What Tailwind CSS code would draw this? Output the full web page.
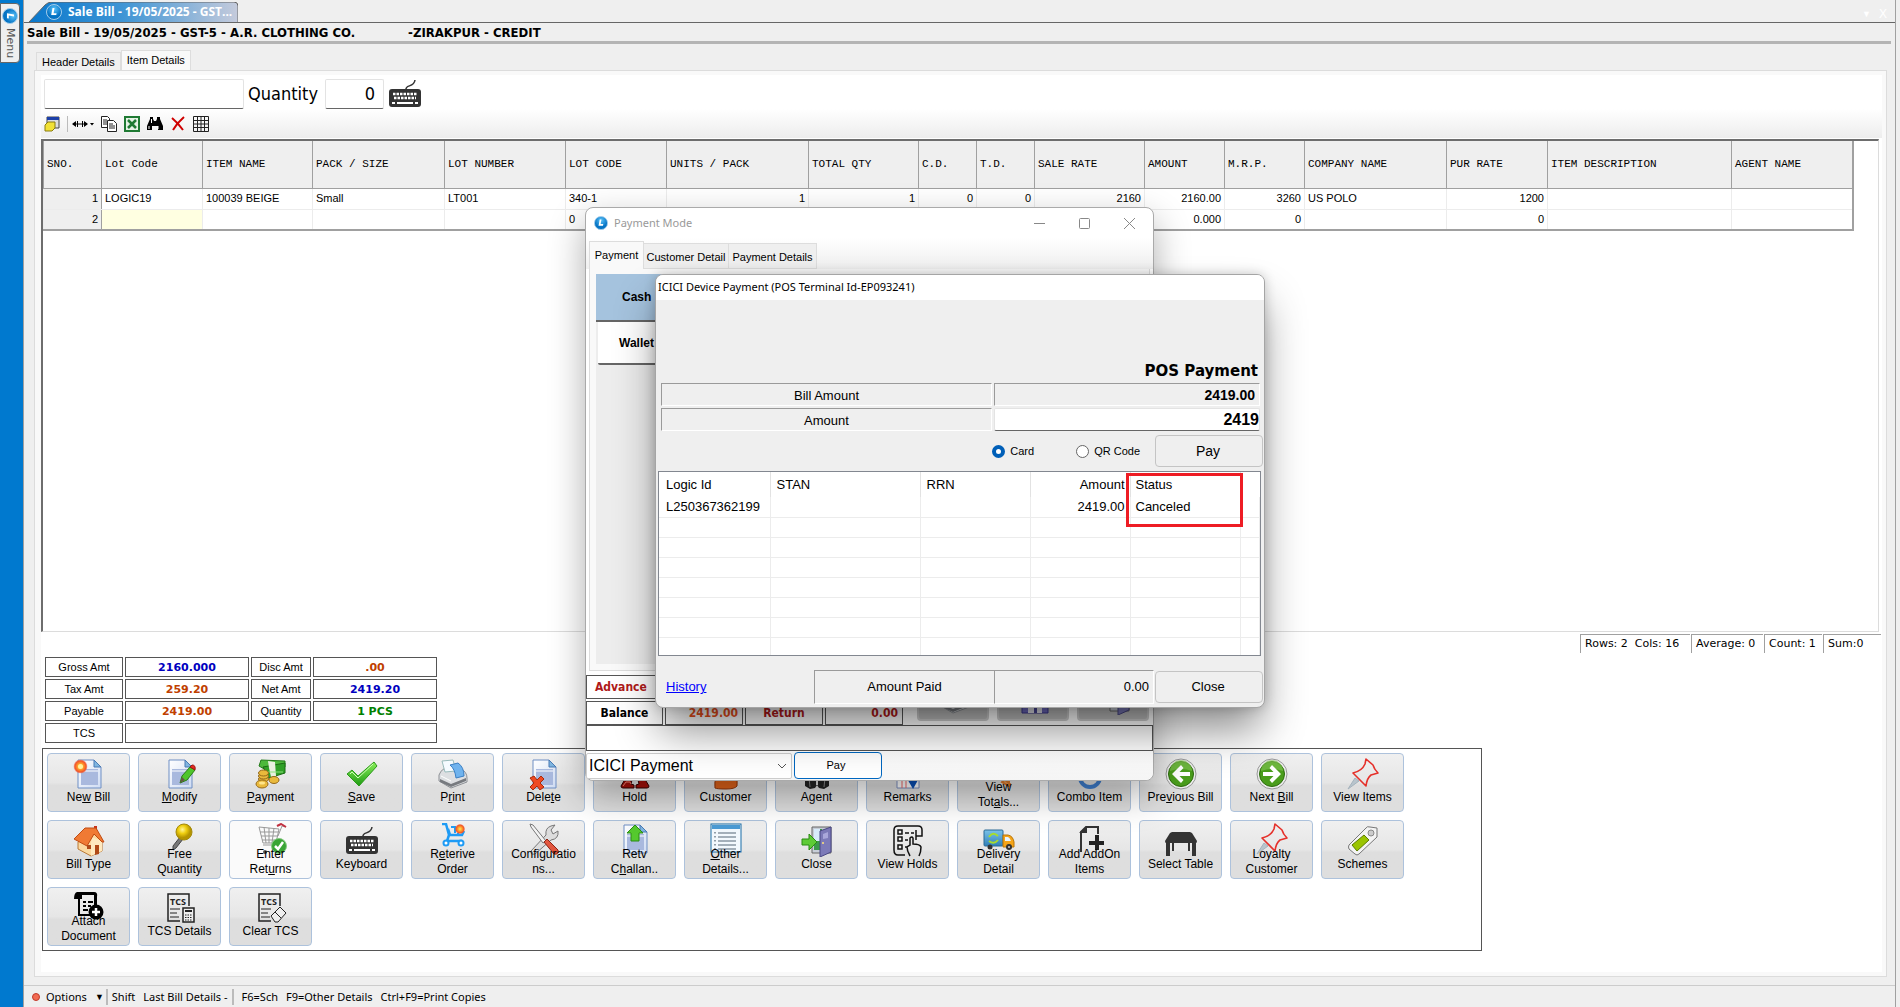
<!DOCTYPE html>
<html lang="en">
<head>
  <meta charset="UTF-8" />
  <meta name="viewport" content="width=device-width, initial-scale=1.0" />
  <title>Sale Bill</title>
  <script src="https://cdn.jsdelivr.net/npm/@tailwindcss/browser@4"></script>
</head>
<body class="flex min-h-screen bg-[#efefef] text-black font-['Liberation_Sans',Arial,sans-serif] text-xs">

  <!-- Icon library (kept rendered at zero size so that the gradients resolve) -->
  <svg class="absolute size-0" aria-hidden="true">
    <defs>
      <linearGradient id="gPaper" x1="0" y1="0" x2="1" y2="1"><stop offset="0" stop-color="#fff"/><stop offset="1" stop-color="#cfdcf3"/></linearGradient>
      <linearGradient id="gGreen" x1="0" y1="0" x2="0" y2="1"><stop offset="0" stop-color="#8af05a"/><stop offset="1" stop-color="#1e9a12"/></linearGradient>
      <linearGradient id="gTruck" x1="0" y1="0" x2="0" y2="1"><stop offset="0" stop-color="#7cc4ea"/><stop offset="1" stop-color="#2f7fb8"/></linearGradient>
      <radialGradient id="gGold" cx=".4" cy=".35"><stop offset="0" stop-color="#fff59a"/><stop offset=".5" stop-color="#f0cf10"/><stop offset="1" stop-color="#b59400"/></radialGradient>
      <radialGradient id="gSun"><stop offset="0" stop-color="#ffe95a"/><stop offset=".45" stop-color="#ff9a2a"/><stop offset=".8" stop-color="#f2542a"/><stop offset="1" stop-color="#f2542a" stop-opacity=".25"/></radialGradient>
      <radialGradient id="gBall" cx=".5" cy=".3"><stop offset="0" stop-color="#5cc4fa"/><stop offset="1" stop-color="#0573c4"/></radialGradient>
      <symbol id="logo" viewBox="0 0 16 16"><circle cx="8" cy="8" r="7.500" fill="url(#gBall)" stroke="#a5cdea"/><path d="M6.500 4 5.200 11h5l.4-1.800H7.600L8.500 4z" fill="#fff"/></symbol>
      <symbol id="page" viewBox="0 0 32 32"><path d="M5 2h16l7 7v21H5z" fill="url(#gPaper)" stroke="#6f8fc4"/><path d="M21 2v7h7z" fill="#7fb6e0" stroke="#4a7ab5"/><path d="M8 11h17v16H8z" fill="#a9b9de"/><path d="M8 13h17" stroke="#fff"/></symbol>
      <symbol id="newbill" viewBox="0 0 32 32"><use href="#page"/><circle cx="7.500" cy="8.500" r="7" fill="url(#gSun)"/><circle cx="7.500" cy="8.500" r="2.500" fill="#fff3a0"/></symbol>
      <symbol id="modify" viewBox="0 0 32 32"><use href="#page"/><path d="m16 25 2-7 8-9 5 3-8 10z" fill="#4fc62c" stroke="#2a7d15"/><path d="m26 9 2-2q4 0 3 5z" fill="#e02b20" stroke="#a01510"/><path d="m16 25 2-6 3 3z" fill="#654"/></symbol>
      <symbol id="payment" viewBox="0 0 32 32"><path d="m6 2 24 1v6L11 12 4 8z" fill="#4db93c" stroke="#247a1b"/><path d="m8 9 22-4v10l-16 5z" fill="#2fa026" stroke="#1b6b14"/><path d="m13 3 7 1 1 14-5 1-2-9z" fill="#e9efdf"/><path d="M11 14h17" stroke="#8be07a"/><g fill="#e9b93c" stroke="#95691a"><ellipse cx="8.500" cy="21" rx="5" ry="3"/><ellipse cx="8.500" cy="18" rx="5" ry="3"/><ellipse cx="8.500" cy="15" rx="5" ry="3"/><ellipse cx="19" cy="22" rx="5" ry="3.500"/><ellipse cx="7" cy="26" rx="6" ry="4"/></g><ellipse cx="7" cy="25" rx="3" ry="1.500" fill="#ffe58a"/></symbol>
      <symbol id="save" viewBox="0 0 32 32"><path d="m1 16 5-4 6 6L28 4l3 4-18 20z" fill="url(#gGreen)" stroke="#2b9a1a"/><path d="m4 16 2-2 6 6L27 6" fill="none" stroke="#d0ffb8"/></symbol>
      <symbol id="print" viewBox="0 0 32 32"><path d="M2 17q3-7 8-7l14 1q6 3 6 9v4l-16 6L2 23z" fill="#dddfe2" stroke="#8c8f94"/><path d="m5 3 11-1 3 11-11 1z" fill="#f5fbff" stroke="#9bb"/><path d="m13 7 8-2q6 4 6 13l-8 2q-1-9-6-13z" fill="#6fb3ee" stroke="#3a7fc4"/><path d="m3 21 11 5 15-6v3l-15 6-11-5z" fill="#777a7f"/><path d="m4 18 10 5" stroke="#fff"/></symbol>
      <symbol id="delete" viewBox="0 0 32 32"><use href="#page"/><path d="m2 20 4-2 3 4 4-4 3 3-4 4 4 4-4 3-3-4-4 4-3-3 4-4z" fill="#ef4a23" stroke="#a82a0c"/></symbol>
      <symbol id="hold" viewBox="0 0 32 32"><path d="m8 18-6 10q0 2 2 2h11v-3l-3-1 2-8zM24 18l6 10q0 2-2 2H17v-3l3-1-2-8z" fill="#a8100b" stroke="#300"/><path d="m4 28 3-4h4l1 2" fill="none" stroke="#ff8d7a"/></symbol>
      <symbol id="customer" viewBox="0 0 32 32"><circle cx="16" cy="9" r="7" fill="#f3c9a0"/><path d="M5 30q-2-14 11-14t11 12q-2 3-11 3T5 30z" fill="#e0631a" stroke="#93360a"/></symbol>
      <symbol id="agent" viewBox="0 0 32 32"><path d="M4 28V18l6-4 6 3 6-3 6 4v10l-5 3-5-1-2-3-2 3-5 1z" fill="#222"/><path d="M15 17h2v10h-2z" fill="#ddd"/><path d="m8 20 1 9M24 20l-1 9" stroke="#888"/></symbol>
      <symbol id="remarks" viewBox="0 0 32 32"><path d="M5 4h22v26H5z" fill="#fff" stroke="#7d8fc0"/><path d="M10 4v26M14 4v26" stroke="#e66"/><path d="M5 14h22M5 20h22" stroke="#aac"/><path d="m17 20 4 7 6-11" fill="none" stroke="#0a4fb5" stroke-width="4"/></symbol>
      <symbol id="totals" viewBox="0 0 32 32"><circle cx="16" cy="14" r="9" fill="#dfe9f5" stroke="#777" stroke-width="2"/><path d="m20 22 8 7M26 20v10l-7-4z" stroke="#e07b2a" stroke-width="2" fill="#f2a45c"/></symbol>
      <symbol id="combo" viewBox="0 0 32 32"><circle cx="16" cy="19" r="10" fill="none" stroke="#3f7fd0" stroke-width="4"/></symbol>
      <symbol id="prev" viewBox="0 0 32 32"><circle cx="16" cy="16" r="15" fill="#eee" stroke="#999"/><circle cx="16" cy="16" r="12.500" fill="#4a9d1c" stroke="#2c6b0c"/><path d="M5 13a11 11 0 0 1 22 0q-11-4-22 0z" fill="#84c653" opacity=".6"/><path d="M16 7v0L7 16l9 9 2.500-3-4-4H25v-4H14.500l4-4z" fill="#fff"/></symbol>
      <symbol id="next" viewBox="0 0 32 32"><circle cx="16" cy="16" r="15" fill="#eee" stroke="#999"/><circle cx="16" cy="16" r="12.500" fill="#4a9d1c" stroke="#2c6b0c"/><path d="M5 13a11 11 0 0 1 22 0q-11-4-22 0z" fill="#84c653" opacity=".6"/><path d="m16 7 9 9-9 9-2.500-3 4-4H7v-4h10.500l-4-4z" fill="#fff"/></symbol>
      <symbol id="pin" viewBox="0 0 32 32"><path d="M8 20 1 31l11-8z" fill="#b8c4cc" stroke="#a5b3bd"/><path d="m19 1-1 5q-3 7-12 9l13 13q1-8 5-11l7-2q-4-4-5-8z" fill="none" stroke="#e5302a" stroke-width="1.600" stroke-linejoin="round"/></symbol>
      <symbol id="house" viewBox="0 0 32 32"><path d="M5 17v7l13 7 11-5V14L19 8z" fill="#fbd9a0" stroke="#b87836"/><path d="M19 12 29 16v10l-11 5V18z" fill="#ffe9bf"/><path d="M21 1h3v9h-3z" fill="#c9301a"/><path d="M12 3h11l8 14h-2l-8-8-7 12L1 14z" fill="#f07a34" stroke="#c04b12"/><path d="M22 20h4v9l-4 1zM14 20h4v4h-4z" fill="#b04a18"/></symbol>
      <symbol id="goldpin" viewBox="0 0 32 32"><path d="m16 14-7 9v4l3-2 7-9z" fill="#777" stroke="#444"/><circle cx="20" cy="9" r="8" fill="url(#gGold)" stroke="#a48a0a"/></symbol>
      <symbol id="returns" viewBox="0 0 32 32"><path d="m4 4 20 2-3 14H8zM5 9h18M6 13h17M7 17h15M9 4l2 16M14 5v15M19 5l-2 15M8 22h16M23 13l4-10 4 1" fill="none" stroke="#999"/><path d="m22 3 4-2 5 3" fill="none" stroke="#c03040" stroke-width="2"/><circle cx="24" cy="23" r="7.500" fill="#3aa535" stroke="#86c983"/><path d="m20 23 3 3 5-7" fill="none" stroke="#fff" stroke-width="2.500"/><circle cx="10" cy="29" r="2" fill="#555"/></symbol>
      <symbol id="keyboard" viewBox="0 0 32 32"><path d="M17 12c-1-6 8-2 9-10" fill="none" stroke="#333" stroke-width="1.500"/><rect x="0" y="11" width="32" height="18" rx="3" fill="#333"/><path d="M4 16h24M5 20h22" stroke="#fff" stroke-width="2.500" stroke-dasharray="2.500 1"/><path d="M3 25h3M8 25h16M26 25h3" stroke="#fff" stroke-width="2"/></symbol>
      <symbol id="retrieve" viewBox="0 0 32 32"><path d="M5 1h4l3 11h13l2-4M12 12l-2 6h15M11 6l2 6" fill="none" stroke="#1e9bf5" stroke-width="2.500"/><path d="M14 4h4v6M21 10v2" fill="none" stroke="#1e9bf5" stroke-width="2"/><circle cx="23" cy="6" r="5" fill="url(#gSun)"/><circle cx="9" cy="20" r="2.500" fill="#fff" stroke="#1e9bf5" stroke-width="2"/><circle cx="24" cy="20" r="2.500" fill="#fff" stroke="#1e9bf5" stroke-width="2"/></symbol>
      <symbol id="tools" viewBox="0 0 32 32"><path d="m3 28 15-16q-1-7 5-9l4-1-4 5 2 4 5-3q1 8-7 9L7 31q-5 1-4-3z" fill="#ddd" stroke="#777"/><path d="m2 1 3 1 13 16-3 2L3 4z" fill="#f3f3f3" stroke="#777"/><path d="m16 19 3-3 11 11q1 5-4 4z" fill="#e2563e" stroke="#8c2414"/></symbol>
      <symbol id="retv" viewBox="0 0 32 32"><use href="#page"/><path d="m16 2 8 8h-4v8h-8v-8H8z" fill="#55c92e" stroke="#2b8c12"/></symbol>
      <symbol id="other" viewBox="0 0 32 32"><rect x="1" y="1" width="30" height="28" fill="#f2f8fd" stroke="#1a6ea8"/><path d="M2 2h28v4H2z" fill="#4b9bd4"/><path d="M8 10h18M8 14h18M8 18h18M8 22h18M8 26h18" stroke="#567"/><path d="M5 9v18" stroke="#345" stroke-dasharray="1.500 2.500"/></symbol>
      <symbol id="door" viewBox="0 0 32 32"><path d="M11 2h19v26H11z" fill="#c8ced8" stroke="#666"/><path d="M13 4h8v21h-8z" fill="#3c9a4b"/><path d="M13 4h6v12h-6z" fill="#d8ecfb"/><path d="m19 6 11-4v25l-11 5z" fill="#7c7ab8" stroke="#4a4884"/><path d="m22 9 5-2v6l-5 1z" fill="#a9a7da"/><circle cx="22" cy="18" r="1" fill="#ffe27a"/><path d="M1 14h7V9l8 8-8 8v-5H1z" fill="#5ecb36" stroke="#2b8c12"/></symbol>
      <symbol id="holds" viewBox="0 0 32 32"><g fill="none" stroke="#111" stroke-width="1.500"><path d="M24 11h6V5q0-4-4-4H6Q2 1 2 5v20q0 5 4 5h7M24 5v10M6 5h4v4H6zM6 12h4v4H6zM6 20h4v4H6zM13 8h4M19 8h3M13 15h3M13 22h2M18 31q-3-5-3-9l3-2V13q2-2 3 0v6q7 0 8 3 0 5-2 9"/></g></symbol>
      <symbol id="truck" viewBox="0 0 32 32"><rect x="1" y="7" width="19" height="16" rx="1" fill="url(#gTruck)" stroke="#2d6b96"/><path d="M20 12h5q5 1 6 7v5H20z" fill="#f5a417" stroke="#b87408"/><path d="M22 14h3q2 1 3 4h-6z" fill="#e8f5ff"/><path d="M6 14q4-6 9-1M15 17q-4 5-9 1" fill="none" stroke="#a6dc2e" stroke-width="2"/><circle cx="7" cy="24" r="2.500" fill="#333"/><circle cx="26" cy="24" r="3" fill="#333"/><circle cx="26" cy="24" r="1" fill="#ccc"/></symbol>
      <symbol id="addon" viewBox="0 0 32 32"><path d="M7 29V9l5-5h12v7" fill="none" stroke="#333" stroke-width="2"/><path d="M5 10h8V3z" fill="#333"/><path d="M23 12v15M15 20h15" stroke="#222" stroke-width="4"/></symbol>
      <symbol id="table" viewBox="0 0 32 32"><path d="m5 8 2-1h18l2 1 5 8q0 3-3 2H3q-3 1-3-2z" fill="#333"/><path d="M3 17v14M29 17v14" stroke="#333" stroke-width="4"/><path d="M8 18v8M24 18v8" stroke="#333" stroke-width="2"/></symbol>
      <symbol id="tag" viewBox="0 0 32 32"><path d="M19 3q1-2 4-1l7 1v9L12 29q-2 2-4 0l-6-5q-1-2 0-4z" fill="#f4f4f4" stroke="#777"/><circle cx="24" cy="8" r="3" fill="#ccc" stroke="#888"/><path d="m5 20 12-10 5 5-12 11z" fill="#9ac400" stroke="#5c7d00"/></symbol>
      <symbol id="attach" viewBox="0 0 32 32"><path d="M4 2h17q4 0 3 5v9h-3V5H9v4H1q0-6 3-7z" fill="#000"/><path d="M6 8v17h11" fill="none" stroke="#000" stroke-width="2"/><path d="M10 12h3M15 12h5M10 16h3M15 16h3M10 20h5" stroke="#000" stroke-width="2"/><circle cx="23" cy="22" r="7.500"/><path d="M23 18v8M19 22h8" stroke="#fff" stroke-width="2.500"/></symbol>
      <symbol id="tcs" viewBox="0 0 32 32"><path d="M16 29H4V2h21v12" fill="none" stroke="#222" stroke-width="1.500"/><text x="6" y="13" font-size="9" font-weight="bold" font-family="Open Sans" fill="#222">TCS</text><path d="M6 17h10M6 21h7M6 25h9" stroke="#222"/></symbol>
      <symbol id="tcsdetails" viewBox="0 0 32 32"><use href="#tcs"/><rect x="19" y="16" width="11" height="14" fill="#eee" stroke="#222" stroke-width="1.500"/><path d="M21 19h7" stroke="#222" stroke-width="2"/><path d="M21 23h7M21 25.500h7M21 28h7" stroke="#222" stroke-dasharray="1.500 1"/></symbol>
      <symbol id="tcsclear" viewBox="0 0 32 32"><use href="#tcs"/><path d="m16 24 9-9 6 6-8 9h-3zM20 20l6 6" fill="#eee" stroke="#222"/></symbol>
      <symbol id="floppy" viewBox="0 0 32 32"><path d="M3 2h26v28H3z" fill="#6f6ac0" stroke="#3d3990"/><path d="M9 17h14v13H9z" fill="#e6e6ee"/><path d="M15 17h3v13h-3z" fill="#4a4696"/></symbol>
    </defs>
  </svg>

  <!-- Docked side menu -->
  <aside class="w-6 shrink-0 border-r border-[#a0a0a0] bg-[#0079cf] pt-[3px]">
    <button class="flex h-[60px] w-5 flex-col items-center gap-1 rounded-r border border-[#666] bg-[#efefef] pt-1 text-[#555]">
      <svg class="size-4 shrink-0 rotate-90"><use href="#logo"/></svg>
      <span class="font-['DejaVu_Sans'] text-[11px] leading-4 [writing-mode:vertical-rl]">Menu</span>
    </button>
  </aside>

  <main class="mr-1 flex min-w-0 grow flex-col border-r border-[#a0a0a0]">
    <!-- Document tab strip -->
    <div class="flex h-[23px] items-end justify-between border-b border-[#666] pl-1">
      <div class="relative h-5 w-[210px]">
        <svg class="absolute inset-0 h-5 w-[210px]" viewBox="0 0 210 20" preserveAspectRatio="none">
          <defs><linearGradient id="gTab"><stop offset="0" stop-color="#0a78cc"/><stop offset=".45" stop-color="#3f95d5"/><stop offset="1" stop-color="#c5cbdc"/></linearGradient></defs>
          <path d="M1 20 17 3q3-3 7-3h182q4 0 4 4v16" fill="url(#gTab)" stroke="#666"/>
        </svg>
        <a href="#" class="relative flex items-center gap-1.5 pl-[18px] font-['Open_Sans',sans-serif] text-xs leading-5 font-bold text-white"><svg class="size-4"><use href="#logo"/></svg>Sale Bill - 19/05/2025 - GST...</a>
      </div>
      <div class="flex items-center gap-2 pr-2 text-xs text-white"><span class="text-[9px]">▼</span><span>X</span></div>
    </div>
    <h1 class="mr-1 ml-[3px] h-[21px] border-b-3 border-[#b4b4b4] font-['DejaVu_Sans_Condensed','DejaVu_Sans',sans-serif] text-[13px] leading-5 font-bold whitespace-pre">Sale Bill - 19/05/2025 - GST-5 - A.R. CLOTHING CO.             -ZIRAKPUR - CREDIT</h1>

    <nav class="mt-[6px] ml-[10px] flex h-5 items-end pl-0.5 text-[11px]">
      <a href="#" class="h-[18px] border border-b-0 border-[#ddd] px-[5px] leading-[18px]">Header Details</a>
      <a href="#" class="h-5 border border-b-0 border-[#ddd] bg-[#f9f9f9] px-[5px] leading-[18px]">Item Details</a>
    </nav>

    <section class="mr-2 mb-2 ml-[10px] flex grow flex-col border border-[#dcdcdc] bg-[#f9f9f9] py-1 pr-1 pl-[6px]">
      <div class="flex grow flex-col bg-white">
        <!-- Entry row -->
        <div class="flex h-[34px] items-center gap-1 pt-[3px] pl-[3px] font-['DejaVu_Sans_Condensed','DejaVu_Sans',sans-serif]">
          <input id="entry" aria-label="Item" class="h-[30px] w-[200px] rounded-xs border border-[#e3e3e3] border-b-[#666] bg-white" />
          <label for="qty" class="w-[73px] text-lg leading-7">Quantity</label>
          <input id="qty" value="0" class="h-[30px] w-[59px] rounded-xs border border-[#e3e3e3] border-b-[#666] bg-white pr-2 text-right text-lg" />
          <button aria-label="Keyboard" class="ml-px"><svg class="size-8"><use href="#keyboard"/></svg></button>
        </div>
        <!-- Grid tools -->
        <div class="flex h-[29px] items-center gap-[7px] bg-linear-to-b from-white to-[#ededed] pl-[3px]">
          <button aria-label="Layout"><svg class="size-4" viewBox="0 0 16 16"><path d="M3 1h12v11H3z" fill="#ddd" stroke="#444"/><path d="M3 1h12v3H3z" fill="#1c3fa8"/><path d="m1 9 3-3h7v6l-3 3H1z" fill="#f2e135" stroke="#8a7d10"/></svg></button>
          <div class="flex items-center gap-1 border-l border-[#bbb] pl-1">
            <button aria-label="Column width"><svg class="h-4 w-[22px]" viewBox="0 0 22 16"><path d="M1 8h14M5.500 5v6M10.500 5v6" stroke="#000"/><path d="m0 8 4-3v6zM16 8l-4-3v6zM18 7h4l-2 2.500z"/></svg></button>
          </div>
          <button aria-label="Copy"><svg class="size-4" viewBox="0 0 16 16"><g fill="#fff" stroke="#222"><path d="M.5.500h6l2 2v9h-8z"/><path d="M6.500 4.500h6l3 3v8h-9z"/></g><path d="M2 4h4M2 6h4M2 8h4M8 8h4M8 10h6M8 12h6" stroke="#222"/></svg></button>
          <button aria-label="Export to Excel"><svg class="size-4" viewBox="0 0 16 16"><rect x="1" y="1" width="14" height="14" fill="#e6f3e6" stroke="#1f7a33" stroke-width="2"/><path d="m4 4 8 8M12 4l-8 8" stroke="#1f7a33" stroke-width="2.500"/></svg></button>
          <button aria-label="Find"><svg class="size-4" viewBox="0 0 16 16"><path d="M3 1h3v2l1 2h2l1-2V1h3v2l3 7v4h-5v-4H5v4H0v-4l3-7z"/><path d="M2 10v3M11 10v3M4.500 3v4" stroke="#fff"/></svg></button>
          <button aria-label="Remove"><svg class="size-4" viewBox="0 0 16 16"><path d="M2 2q6 5 11 12M14 1Q7 7 3 14" fill="none" stroke="#cf0000" stroke-width="2"/></svg></button>
          <button aria-label="Grid"><svg class="size-4" viewBox="0 0 16 16"><path d="M.5.500h15v15H.5zM4.500 0v16M8 0v16M11.500 0v16M0 4.500h16M0 8h16M0 11.500h16" fill="none" stroke="#222"/></svg></button>
        </div>

        <!-- Items grid -->
        <div class="mt-px mr-[3px] grow border border-t-2 border-l-2 border-[#dcdcdc] border-t-[#6d6d6d] border-l-[#6d6d6d]">
          <table class="w-[1811px] table-fixed border-collapse border-r-2 border-b-2 border-[#a0a0a0] text-[11px] [&_td]:border [&_td]:border-[#ececec] [&_td]:px-[3px] [&_th]:border [&_th]:border-t-0 [&_th]:border-[#a0a0a0] [&_th]:px-[3px]">
            <colgroup>
              <col class="w-[58px]"><col class="w-[101px]"><col class="w-[110px]"><col class="w-[132px]"><col class="w-[121px]"><col class="w-[101px]"><col class="w-[142px]"><col class="w-[110px]"><col class="w-[58px]"><col class="w-[58px]"><col class="w-[110px]"><col class="w-[80px]"><col class="w-[80px]"><col class="w-[142px]"><col class="w-[101px]"><col class="w-[184px]"><col>
            </colgroup>
            <thead class="bg-[#efefef] text-left font-['Liberation_Mono',monospace] [&_th]:font-normal">
              <tr class="h-[47px]"><th>SNO.</th><th>Lot Code</th><th>ITEM NAME</th><th>PACK / SIZE</th><th>LOT NUMBER</th><th>LOT CODE</th><th>UNITS / PACK</th><th>TOTAL QTY</th><th>C.D.</th><th>T.D.</th><th>SALE RATE</th><th>AMOUNT</th><th>M.R.P.</th><th>COMPANY NAME</th><th>PUR RATE</th><th>ITEM DESCRIPTION</th><th>AGENT NAME</th></tr>
            </thead>
            <tbody>
              <tr class="h-[21px]"><td class="border-r-[#a0a0a0]! bg-[#efefef] text-right">1</td><td>LOGIC19</td><td>100039 BEIGE</td><td>Small</td><td>LT001</td><td>340-1</td><td class="text-right">1</td><td class="text-right">1</td><td class="text-right">0</td><td class="text-right">0</td><td class="text-right">2160</td><td class="text-right">2160.00</td><td class="text-right">3260</td><td>US POLO</td><td class="text-right">1200</td><td></td><td></td></tr>
              <tr class="h-[21px]"><td class="border-r-[#a0a0a0]! bg-[#efefef] text-right">2</td><td class="bg-[#ffffe1]"></td><td></td><td></td><td></td><td>0</td><td></td><td></td><td></td><td></td><td></td><td class="text-right">0.000</td><td class="text-right">0</td><td></td><td class="text-right">0</td><td></td><td></td></tr>
            </tbody>
          </table>
        </div>

        <div class="mt-0.5 mr-px flex justify-end gap-px font-['DejaVu_Sans'] text-[11px] leading-[18px] whitespace-pre *:border-t *:border-l *:border-[#a0a0a0] *:pl-1"><span class="w-[110px]">Rows: 2  Cols: 16</span><span class="w-[72px]">Average: 0</span><span class="w-[58px]">Count: 1</span><span class="w-[58px]">Sum:0</span></div>

        <!-- Bill totals -->
        <div class="mt-1 ml-1 grid w-[392px] grid-cols-[78px_124px_60px_124px] gap-0.5 text-center text-[11px] leading-[19px] *:h-5 *:border *:border-[#555]">
          <span>Gross Amt</span><b class="font-['DejaVu_Sans'] text-[#0000c0]">2160.000</b><span>Disc Amt</span><b class="font-['DejaVu_Sans'] text-[#c04000]">.00</b>
          <span>Tax Amt</span><b class="font-['DejaVu_Sans'] text-[#c04000]">259.20</b><span>Net Amt</span><b class="font-['DejaVu_Sans'] text-[#0000c0]">2419.20</b>
          <span>Payable</span><b class="font-['DejaVu_Sans'] text-[#c04000]">2419.00</b><span>Quantity</span><b class="font-['DejaVu_Sans'] text-[#008000]">1 PCS</b>
          <span>TCS</span><b class="col-span-3"></b>
        </div>

        <div id="actions" class="mt-[5px] mb-[21px] ml-px flex max-w-[1440px] flex-wrap gap-2 border border-[#555] p-1"></div>
      </div>
    </section>

    <!-- Status bar -->
    <footer class="flex h-[22px] shrink-0 items-center border-t border-[#ccc] pl-2 font-['Noto_Sans',sans-serif] text-[11px] leading-5 whitespace-nowrap">
      <span class="mr-1.5 size-2 rounded-full border border-[#c0392b] bg-[#f26b52]"></span>
      <a href="#">Options</a><span class="ml-2 text-[9px]">▼</span>
      <span class="mr-1 ml-0.5 h-4 border-l-2 border-[#bbb]"></span>
      <span class="mr-2">Shift</span><span>Last Bill Details -</span>
      <span class="mr-2 ml-1 h-4 border-l-2 border-[#bbb]"></span>
      <span class="mr-2">F6=Sch</span><span class="mr-2">F9=Other Details</span><span>Ctrl+F9=Print Copies</span>
    </footer>
  </main>

  <!-- Payment Mode window -->
  <div class="absolute top-[207px] left-[585px] flex h-[574px] w-[569px] flex-col rounded-lg border border-[#aaa] bg-white shadow-[0_14px_36px_rgba(0,0,0,0.32)]">
    <div class="flex h-[30px] items-center pl-2 text-[#999]">
      <svg class="mr-1.5 size-[14px]"><use href="#logo"/></svg>
      <h2 class="grow font-['Noto_Sans',sans-serif] text-[11px]">Payment Mode</h2>
      <button aria-label="Minimise" class="px-[17px]"><svg class="size-[11px]" viewBox="0 0 11 11"><path d="M0 5.500h11" stroke="#888"/></svg></button>
      <button aria-label="Maximise" class="px-[17px]"><svg class="size-[11px]" viewBox="0 0 11 11"><rect x=".5" y=".5" width="10" height="10" rx="1" fill="none" stroke="#888"/></svg></button>
      <button aria-label="Close" class="pr-[18px] pl-[17px]"><svg class="size-[11px]" viewBox="0 0 11 11"><path d="m0 0 11 11M11 0 0 11" stroke="#888"/></svg></button>
    </div>
    <nav class="flex h-[31px] items-end bg-linear-to-b from-white to-[#efefef] pl-[3px] text-[11px]">
      <a href="#" class="h-[28px] w-[55px] border border-b-0 border-[#ddd] bg-[#f9f9f9] text-center leading-[26px]">Payment</a>
      <a href="#" class="h-[26px] w-[85px] border border-l-0 border-[#ddd] bg-[#efefef] text-center leading-[26px]">Customer Detail</a>
      <a href="#" class="h-[26px] w-[88px] border border-l-0 border-[#ddd] bg-[#efefef] text-center leading-[26px]">Payment Details</a>
    </nav>
    <div class="mx-[3px] h-[402px] border border-t-0 border-[#ddd] bg-[#f9f9f9] p-1.5 pt-[5px]">
      <div class="h-full bg-[#ededed] text-left font-bold">
        <button class="block h-12 w-[85px] border-b-2 border-[#666] bg-[#a5c3de] pl-[26px] text-left text-xs">Cash</button>
        <button class="ml-0.5 block h-[43px] w-[83px] rounded-b-xs border-b-2 border-[#666] bg-white pl-[21px] text-left text-xs">Wallet</button>
      </div>
    </div>
    <div class="grid h-[54px] grid-cols-[77px_78px_78px_78px_1fr] gap-0.5 pt-1 font-['DejaVu_Sans_Condensed','DejaVu_Sans',sans-serif] text-xs leading-[22px] font-bold">
      <span class="h-6 border border-[#555] pl-2 text-[#b01a1a]">Advance</span><span></span><span></span><span></span><span></span>
      <span class="h-6 border border-[#555] text-center">Balance</span>
      <span class="h-6 border border-[#555] pr-1 text-right text-[#e8501c]">2419.00</span>
      <span class="h-6 border border-[#555] text-center text-[#b01a1a]">Return</span>
      <span class="h-6 border border-[#555] pr-1 text-right text-[#b01a1a]">0.00</span>
      <div class="-mt-6 ml-3 flex h-11 gap-2 *:h-11 *:w-[72px] *:rounded *:border-2 *:border-[#ccc] *:bg-[#bcbcbc] *:pl-5">
        <button aria-label="Print"><svg class="size-8"><use href="#print"/></svg></button>
        <button aria-label="Save"><svg class="size-8"><use href="#floppy"/></svg></button>
        <button aria-label="Exit"><svg class="size-8"><use href="#door"/></svg></button>
      </div>
    </div>
    <div class="h-[26px] shrink-0 border border-[#555]"></div>
    <div class="flex grow items-center gap-0.5 rounded-b-lg bg-linear-to-b from-white to-[#f5f5f5]">
      <div class="relative">
        <select aria-label="Payment type" class="h-[26px] w-[206px] appearance-none rounded-xs border border-[#ccc] bg-white pl-0.5 text-base leading-5"><option>ICICI Payment</option></select>
        <svg class="absolute top-2.5 right-1.5 h-[6px] w-2" viewBox="0 0 8 6"><path d="m0 1 4 4 4-4" fill="none" stroke="#555"/></svg>
      </div>
      <button class="h-[27px] w-[88px] rounded border border-[#0067c0] bg-white pr-1 text-[11px]">Pay</button>
    </div>
  </div>

  <!-- ICICI device dialog -->
  <div class="absolute top-[274px] left-[655px] flex h-[434px] w-[610px] flex-col overflow-clip rounded-lg border border-[#a5a5a5] bg-[#efefef] shadow-[0_26px_44px_-4px_rgba(0,0,0,0.45),0_0_12px_rgba(0,0,0,0.2)]">
    <h2 class="h-[25px] bg-white pl-[2px] font-['Noto_Sans',sans-serif] text-[11px] leading-6">ICICI Device Payment (POS Terminal Id-EP093241)</h2>
    <h3 class="mt-[60px] h-[23px] pr-1.5 text-right font-['DejaVu_Sans'] text-[15px] leading-[22px] font-bold">POS Payment</h3>
    <div class="grid grid-cols-[331px_266px] gap-x-0.5 gap-y-0.5 pl-[5px] text-[13px]">
      <label for="bill" class="h-[23px] border border-[#9a9a9a] border-r-white border-b-white text-center leading-[23px]">Bill Amount</label>
      <input id="bill" readonly value="2419.00" class="h-[23px] border border-[#9a9a9a] border-r-white border-b-white pr-1 text-right text-sm font-bold" />
      <label for="amount" class="h-[23px] border border-[#9a9a9a] border-r-white border-b-white text-center leading-[23px]">Amount</label>
      <input id="amount" value="2419" class="h-[23px] rounded-xs border border-[#e3e3e3] border-b-[#666] bg-white text-right text-base font-bold" />
    </div>
    <div class="flex h-10 items-center justify-end pr-px text-[11px]">
      <label class="mr-[42px] flex items-center gap-[5px]"><input type="radio" name="mode" checked class="size-[13px] appearance-none rounded-full border border-[#005fb8] bg-white checked:border-4" />Card</label>
      <label class="mr-[15px] flex items-center gap-[5px]"><input type="radio" name="mode" class="size-[13px] appearance-none rounded-full border border-[#666] bg-white checked:border-4" />QR Code</label>
      <button class="h-8 w-[108px] rounded border border-[#c4c4c4] pr-0.5 text-sm">Pay</button>
    </div>
    <div class="mr-[3px] ml-[2px] h-[185px] shrink-0 overflow-clip border border-[#828790] bg-white">
      <table class="w-full table-fixed border-collapse text-[13px] [&_td]:border-r [&_td]:border-b [&_td]:border-[#ececec] [&_td]:px-[7px] [&_th]:border-r [&_th]:border-[#e2e2e2] [&_th]:px-[7px] [&_th]:font-normal">
        <colgroup><col class="w-[111px]"><col class="w-[150px]"><col class="w-[110px]"><col class="w-[100px]"><col class="w-[110px]"><col></colgroup>
        <thead><tr class="h-[25px] text-left"><th>Logic Id</th><th class="pl-1.5!">STAN</th><th class="pl-1.5!">RRN</th><th class="pr-[5px]! text-right">Amount</th><th class="pl-[5px]!">Status</th><th class="border-r-0!"></th></tr></thead>
        <tbody id="log">
          <tr class="h-5"><td>L250367362199</td><td></td><td></td><td class="pr-[5px]! text-right">2419.00</td><td class="pl-[5px]!">Canceled</td><td></td></tr>
        </tbody>
      </table>
    </div>
    <!-- Highlight on the status column -->
    <div class="absolute top-[198px] left-[470px] h-[54px] w-[117px] border-3 border-[#ee1c24]"></div>
    <div class="mt-[14px] flex items-center pr-px text-[13px]">
      <a href="#" class="ml-[10px] grow text-[#0000ff] underline">History</a>
      <span class="h-[34px] w-[180px] border border-r-0 border-[#9a9a9a] border-b-white text-center leading-8">Amount Paid</span>
      <span class="h-[34px] w-[160px] border border-[#9a9a9a] border-r-white border-b-white pr-1 text-right leading-8">0.00</span>
      <button class="ml-px h-8 w-[108px] rounded border border-[#c4c4c4] pr-0.5">Close</button>
    </div>
  </div>

  <script>
    // [icon, label]; the symbols live in the defs block above
    const actions = [
      ['newbill', 'Ne<u>w</u> Bill'], ['modify', '<u>M</u>odify'], ['payment', '<u>P</u>ayment'], ['save', '<u>S</u>ave'],
      ['print', 'P<u>r</u>int'], ['delete', 'Dele<u>t</u>e'], ['hold', 'Hold'], ['customer', 'Customer'], ['agent', 'Agent'],
      ['remarks', 'Remarks'], ['totals', 'View<br>Tot<u>a</u>ls...'], ['combo', 'Combo Item'], ['prev', 'Pre<u>v</u>ious Bill'],
      ['next', 'Next <u>B</u>ill'], ['pin', 'View Items'],
      ['house', 'Bill Type'], ['goldpin', 'Free<br>Quantity'], ['returns', 'Enter<br>Ret<u>u</u>rns'], ['keyboard', 'Keyboard'],
      ['retrieve', 'R<u>e</u>terive<br>Order'], ['tools', 'Confi<u>g</u>uratio<br>ns...'], ['retv', 'Retv<br>C<u>h</u>allan..'],
      ['other', '<u>O</u>ther<br>Details...'], ['door', 'Close'], ['holds', 'View Holds'], ['truck', 'Delivery<br>Detail'],
      ['addon', 'Add AddOn<br>Items'], ['table', 'Select Table'], ['pin', 'Loyalty<br>Customer'], ['tag', 'Schemes'],
      ['attach', 'Attach<br>Document'], ['tcsdetails', 'TCS Details'], ['tcsclear', 'Clear TCS']
    ];

    document.getElementById('actions').innerHTML = actions.map(([icon, label]) => {
      const bg = icon === 'returns' ? 'bg-[#fafafa]' : 'bg-linear-to-b from-[#f0f0f0] from-0% via-[#e6e6e6] via-50% to-[#dedede] to-55%';
      // two-line captions run up over the icon; those icons sit a little higher
      const two = label.includes('<br>');
      return `<button class="flex h-[59px] w-[83px] flex-col items-center rounded border border-[#adc2dc] ${two ? 'pt-0.5' : 'pt-1'} ${bg}">
        <svg class="size-8 shrink-0"><use href="#${icon}"/></svg>
        <span class="${two ? '-mt-2' : ''} relative text-xs leading-[15px] whitespace-nowrap">${label}</span>
      </button>`;
    }).join('');

    // Blank rows below the single log entry
    document.getElementById('log').innerHTML += '<tr class="h-5"><td></td><td></td><td></td><td></td><td></td><td></td></tr>'.repeat(7);
  </script>
</body>
</html>
